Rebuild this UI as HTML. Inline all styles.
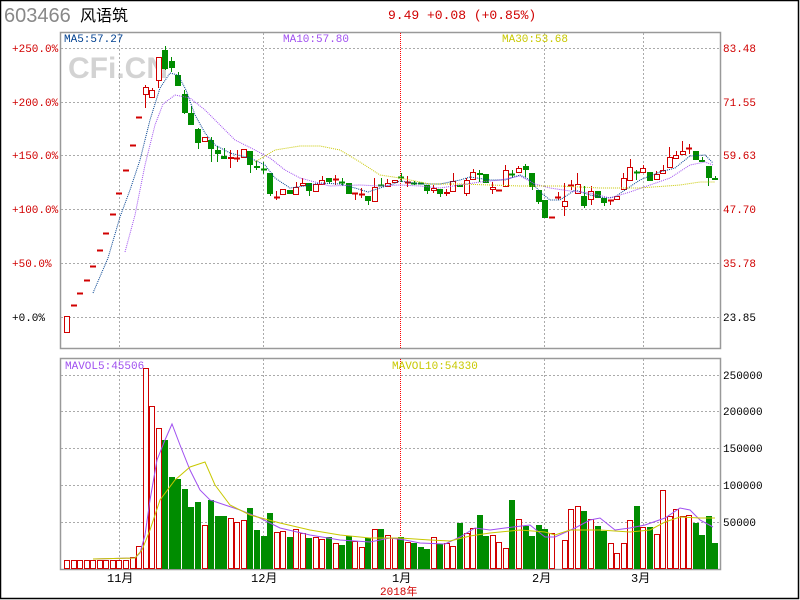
<!DOCTYPE html>
<html><head><meta charset="utf-8">
<style>
html,body{margin:0;padding:0;background:#fff;}
body{width:800px;height:600px;overflow:hidden;position:relative;}
svg{position:absolute;left:0;top:0;}
text{font-family:"Liberation Mono","DejaVu Sans Mono",monospace;font-size:11px;}
</style></head><body>
<svg id="s" width="800" height="600" xmlns="http://www.w3.org/2000/svg">
<rect x="0.5" y="0.5" width="798" height="598" fill="#fff" stroke="#000" stroke-width="1.5"/>
<text x="4" y="22" style="font-family:'Liberation Sans',sans-serif;font-size:20px" fill="#888">603466</text>
<text x="80" y="21" style="font-family:'Liberation Sans','Noto Sans CJK SC',sans-serif;font-size:16px" fill="#000">风语筑</text>
<text x="388" y="19" style="font-family:'Liberation Mono','Noto Sans CJK SC',monospace;font-size:13px" fill="#d00000">9.49 +0.08 (+0.85%)</text>
<text x="68" y="78" style="font-family:'Liberation Sans',sans-serif;font-size:30px;font-weight:bold" fill="#d3d3d3">CFi.CN</text>
<g id="g"></g>
</svg>
<script>
var NS="http://www.w3.org/2000/svg",g=document.getElementById('g');
function el(t,a,txt){var e=document.createElementNS(NS,t);for(var k in a)e.setAttribute(k,a[k]);if(txt!=null)e.textContent=txt;g.appendChild(e);return e;}
el('rect',{x:60.5,y:32.5,width:660,height:316,fill:'none',stroke:'#999','stroke-width':1.5});
el('rect',{x:60.5,y:358.5,width:660,height:211,fill:'none',stroke:'#999','stroke-width':1.5});
var dash={stroke:'#aaa','stroke-dasharray':'2,2','stroke-width':1};
[48,102,155,209,263,317].forEach(function(y){el('line',Object.assign({x1:61,x2:720,y1:y+.5,y2:y+.5},dash));});
[375,411,448,485,522].forEach(function(y){el('line',Object.assign({x1:61,x2:720,y1:y+.5,y2:y+.5},dash));});
[119,263,544,643].forEach(function(x){el('line',Object.assign({x1:x+.5,x2:x+.5,y1:33,y2:348},dash));el('line',Object.assign({x1:x+.5,x2:x+.5,y1:359,y2:569},dash));});
el('line',{x1:400.5,x2:400.5,y1:33,y2:348,stroke:'#f00','stroke-dasharray':'1,1'});
el('line',{x1:400.5,x2:400.5,y1:359,y2:569,stroke:'#f00','stroke-dasharray':'1,1'});
var ll=[['+250.0%',48],['+200.0%',102],['+150.0%',155],['+100.0%',209],['+50.0%',263],['+0.0%',317]];
ll.forEach(function(l,i){el('text',{x:12,y:l[1]+4,fill:i==5?'#000':'#d00000'},l[0]);});
var rl=[['83.48',48],['71.55',102],['59.63',155],['47.70',209],['35.78',263],['23.85',317]];
rl.forEach(function(l,i){el('text',{x:723,y:l[1]+4,fill:i==5?'#000':'#d00000'},l[0]);});
[['250000',375],['200000',411],['150000',448],['100000',485],['50000',522]].forEach(function(l){el('text',{x:723,y:l[1]+4,fill:'#000'},l[0]);});
el('text',{x:64,y:42,fill:'#004090'},'MA5:57.27');
el('text',{x:283,y:42,fill:'#a050f0'},'MA10:57.80');
el('text',{x:502,y:42,fill:'#c8c800'},'MA30:53.68');
el('text',{x:65,y:369,fill:'#a050f0'},'MAVOL5:45506');
el('text',{x:392,y:369,fill:'#c8c800'},'MAVOL10:54330');
[['11月',107],['12月',251],['1月',392],['2月',532],['3月',631]].forEach(function(l){el('text',{x:l[1],y:582,fill:'#000',style:"font-family:'Liberation Mono','Noto Sans CJK SC',monospace;font-size:12px"},l[0]);});
el('text',{x:380,y:595,fill:'#d00000',style:"font-family:'Liberation Mono','Noto Sans CJK SC',monospace;font-size:11px"},'2018年');
var C=[[316,333,316,333,'r'],[305,305],[293,293],[280,280],[266,266],[250,250],[233,233],[214,214],[193,193],[170,170],[145,145],[117,117],
[87,95,85,108,'r'],[90,98,88,98,'r'],[57,81,57,88,'r'],[50,69,46,70,'g'],[61,68,57,72,'g'],[75,86,72,86,'g'],[94,113,90,114,'g'],[113,125,106,125,'g'],[129,143,128,149,'g'],[137,142,137,142,'r'],[140,149,137,162,'g'],[150,154,146,162,'g'],[156,159,148,159,'g'],[157,159,150,168,'r'],[158,158,150,162,'r'],[149,158,149,158,'r'],[151,165,151,173,'g'],[166,168,161,170,'g'],[169,169,162,174,'g'],[173,194,173,196,'g'],[197,197,191,200,'r'],[189,195,189,195,'r'],[190,194,190,194,'g'],[187,195,182,195,'r'],[183,186,178,186,'r'],[183,191,183,196,'g'],[184,192,184,192,'r'],[180,185,176,185,'r'],[178,182,178,184,'g'],[179,179,175,185,'r'],[182,182,178,186,'g'],[183,194,183,194,'g'],[193,193,193,200,'r'],[194,194,188,198,'r'],[196,201,196,205,'g'],[187,202,178,202,'r'],[185,186,178,186,'g'],[183,187,179,187,'r'],[180,183,180,183,'r'],[177,177,173,182,'g'],[182,182,176,187,'r'],[183,183,181,185,'g'],[183,184,183,184,'g'],[185,191,185,194,'g'],[188,191,185,193,'r'],[189,194,189,197,'g'],[192,194,189,196,'r'],[181,192,173,192,'r'],[185,187,185,187,'g'],[180,194,178,196,'r'],[172,180,169,180,'r'],[173,175,170,182,'g'],[174,183,174,183,'g'],[187,190,182,194,'r'],[190,190,190,190,'r'],[170,187,165,187,'r'],[174,174,170,178,'g'],[168,173,166,173,'r'],[166,170,164,177,'g'],[173,187,173,190,'g'],[190,202,190,204,'g'],[200,218,200,218,'g'],[217,217,217,217,'r'],[197,197,192,200,'r'],[201,207,183,216,'r'],[185,185,180,190,'r'],[184,194,173,194,'r'],[196,206,186,208,'g'],[191,200,186,205,'r'],[191,198,191,198,'g'],[198,203,198,206,'g'],[200,200,200,205,'r'],[196,200,196,200,'r'],[178,190,173,190,'r'],[167,181,159,181,'r'],[172,172,170,180,'g'],[168,173,165,173,'r'],[172,181,172,181,'g'],[174,180,171,180,'r'],[170,174,165,174,'r'],[157,168,147,168,'r'],[155,159,151,159,'r'],[151,155,141,155,'r'],[148,148,144,154,'r'],[151,160,151,160,'g'],[160,162,157,162,'g'],[166,178,166,186,'g'],[178,180,176,180,'g']];
var RED='#d00000',GRN='#008c00';
C.forEach(function(c,i){
  var x=64+i*6.55, cx=Math.round(x+2.5)+.5; var col=(c[4]||'r')=='g'?GRN:RED;
  var t=c[0],b=c[1],h=c[2]==null?t:c[2],l=c[3]==null?b:c[3];
  if(h<t) el('line',{x1:cx,x2:cx,y1:h,y2:t,stroke:col});
  if(l>b) el('line',{x1:cx,x2:cx,y1:b,y2:l,stroke:col});
  if(b-t<2){el('rect',{x:Math.round(x),y:t-.5,width:6,height:2,fill:col});}
  else if(col==GRN){el('rect',{x:Math.round(x),y:t,width:6,height:b-t,fill:col});}
  else{el('rect',{x:Math.round(x)+.5,y:t+.5,width:5,height:b-t-1,fill:'#fff',stroke:col});}
});
var V=[560,560,560,560,560,560,560,560,560,560,557,546,368,406,428,440,477,479,489,507,502,525,500,516,516,518,522,520,508,530,536,513,532,531,537,529,533,538,537,539,537,543,545,536,541,547,538,529,529,535,538,537,542,543,547,549,537,544,543,546,523,533,528,515,536,535,542,548,500,519,526,536,525,529,533,569,540,509,506,511,519,526,531,543,553,543,520,506,527,527,534,490,516,509,516,515,523,535,516,543];
V.forEach(function(v,i){
  if(v>=568)return;
  var x=Math.round(64+i*6.55); var g2=(C[i][4]||'r')=='g';
  if(g2) el('rect',{x:x,y:v,width:6,height:569-v,fill:GRN});
  else el('rect',{x:x+.5,y:v+.5,width:5,height:568-v,fill:'#fff',stroke:RED});
});
function pl(pts,col,d){el('polyline',{points:pts.map(function(p){return p.join(',')}).join(' '),fill:'none',stroke:col,'stroke-width':1,'stroke-dasharray':d||'none'});}
pl([[93,293],[108,258],[120,217],[130,190],[140,160],[150,120],[160,88],[170,73],[178,75],[186,90],[195,115],[205,133],[215,145],[230,153],[250,158],[265,165],[275,178],[290,188],[305,186],[320,183],[340,184],[355,188],[368,192],[380,188],[393,184],[400,181],[420,184],[440,184],[460,180],[470,177],[490,180],[505,180],[520,175],[530,180],[540,192],[550,200],[560,200],[575,190],[590,195],[605,198],[615,197],[625,190],[640,180],[660,172],[675,168],[690,156],[705,155],[713,163]],'#004090','1,1');
pl([[125,252],[135,215],[145,165],[155,125],[163,104],[175,95],[190,98],[205,110],[220,125],[235,140],[255,150],[270,158],[285,170],[300,178],[330,186],[360,185],[380,186],[400,185],[420,186],[440,188],[460,185],[480,182],[500,180],[520,176],[535,184],[550,188],[570,191],[590,193],[610,198],[630,192],[650,185],[670,178],[690,165],[705,162],[713,165]],'#a050f0','1,1');
pl([[255,162],[275,150],[300,146],[320,146],[340,150],[360,162],[380,175],[400,178],[430,184],[460,184],[490,185],[520,186],[560,186],[600,188],[640,188],[680,185],[700,182],[715,182]],'#c8c800','1,1');
pl([[93,559],[135,558],[140,553],[145,535],[150,500],[157,460],[165,440],[172,424],[180,445],[190,470],[200,490],[210,500],[225,505],[240,510],[260,518],[280,528],[310,535],[340,540],[370,542],[390,538],[405,540],[420,543],[445,544],[460,537],[475,528],[490,530],[505,528],[530,525],[545,537],[555,537],[575,528],[590,520],[600,518],[615,530],[630,528],[645,525],[665,518],[680,508],[690,510],[700,520],[713,527]],'#a050f0');
pl([[93,559],[135,558],[142,550],[150,530],[160,500],[175,480],[190,467],[205,462],[215,485],[230,505],[250,515],[280,523],[310,530],[340,535],[370,538],[400,538],[430,540],[450,541],[470,536],[490,533],[520,530],[545,532],[555,535],[570,530],[600,530],[630,532],[650,530],[665,522],[680,517],[700,518],[715,518]],'#c8c800');
</script>
</body></html>
